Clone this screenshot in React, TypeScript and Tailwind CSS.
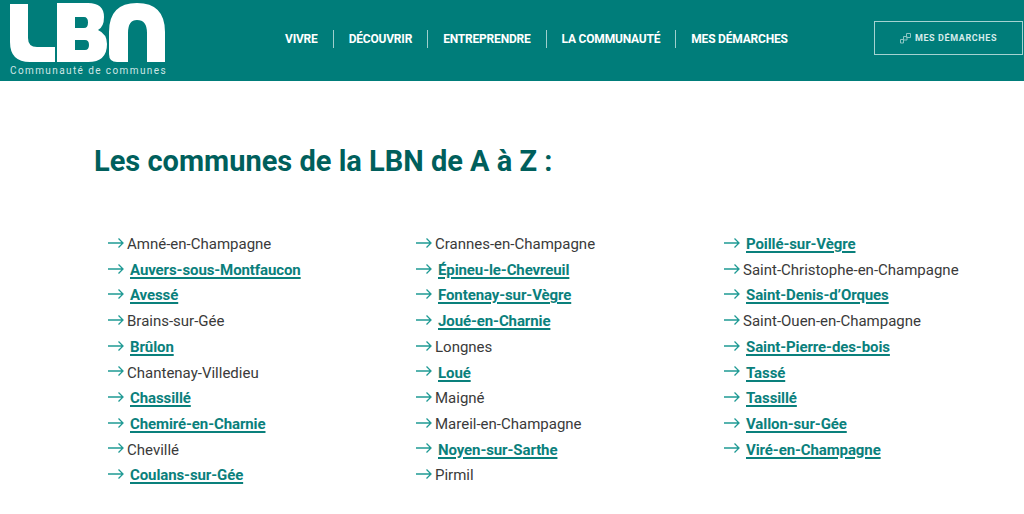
const nav = ['VIVRE', 'DÉCOUVRIR', 'ENTREPRENDRE', 'LA COMMUNAUTÉ', 'MES DÉMARCHES'];

type Commune = { name: string; link?: boolean };

const columns: Commune[][] = [
  [
    { name: 'Amné-en-Champagne' },
    { name: 'Auvers-sous-Montfaucon', link: true },
    { name: 'Avessé', link: true },
    { name: 'Brains-sur-Gée' },
    { name: 'Brûlon', link: true },
    { name: 'Chantenay-Villedieu' },
    { name: 'Chassillé', link: true },
    { name: 'Chemiré-en-Charnie', link: true },
    { name: 'Chevillé' },
    { name: 'Coulans-sur-Gée', link: true },
  ],
  [
    { name: 'Crannes-en-Champagne' },
    { name: 'Épineu-le-Chevreuil', link: true },
    { name: 'Fontenay-sur-Vègre', link: true },
    { name: 'Joué-en-Charnie', link: true },
    { name: 'Longnes' },
    { name: 'Loué', link: true },
    { name: 'Maigné' },
    { name: 'Mareil-en-Champagne' },
    { name: 'Noyen-sur-Sarthe', link: true },
    { name: 'Pirmil' },
  ],
  [
    { name: 'Poillé-sur-Vègre', link: true },
    { name: 'Saint-Christophe-en-Champagne' },
    { name: 'Saint-Denis-d’Orques', link: true },
    { name: 'Saint-Ouen-en-Champagne' },
    { name: 'Saint-Pierre-des-bois', link: true },
    { name: 'Tassé', link: true },
    { name: 'Tassillé', link: true },
    { name: 'Vallon-sur-Gée', link: true },
    { name: 'Viré-en-Champagne', link: true },
  ],
];

const Logo = () => (
  <svg width="157" height="64" viewBox="0 0 157 64" fill="none" className="block">
    <path fill="white" d="M0 4H18V38Q18 47 27 47H45V62H20Q0 62 0 42Z" />
    <path fillRule="evenodd" fill="white" d="M47 3H78Q94 3 94 17Q94 27 88 30Q97 34 97 44Q97 62 78 62H47ZM65 17V28H74Q78 28 78 22.5Q78 17 74 17ZM65 40V50H75Q79 50 79 45Q79 40 75 40Z" />
    <path fill="white" d="M99 32Q99 3 127 3Q155 3 155 32V62H137V33Q137 20 127 20Q118 20 118 33V62H107Q99 62 99 54Z" />
  </svg>
);

const Arrow = () => (
  <svg width="16" height="12" viewBox="0 0 16 12" fill="none" stroke="#1f9a94" strokeWidth="1.3" className="shrink-0 -mt-[3px]">
    <path d="M0 6H15M10.5 1.5L15 6L10.5 10.5" />
  </svg>
);

const Row = ({ name, link }: Commune) => (
  <li className="flex items-center h-[25.7px]">
    <Arrow />
    {link ? (
      <a className="ml-[6px] font-bold text-[15px] text-[#0a807c] underline underline-offset-2 decoration-[1.5px] tracking-[-0.1px]">{name}</a>
    ) : (
      <span className="ml-[3px] text-[15px] text-[#3a3a3a]">{name}</span>
    )}
  </li>
);

export default function App() {
  return (
    <div className="min-h-[514px] bg-white font-['Roboto',sans-serif] overflow-hidden">
      <header className="h-[81px] bg-[#007d7a] flex items-start overflow-hidden">
        <div className="w-[285px] shrink-0 pl-[10px] relative h-full">
          <Logo />
          <span className="absolute left-[10px] top-[65px] text-[10px] leading-[12px] text-[#cfe6e5] tracking-[1.4px] whitespace-nowrap">Communauté de communes</span>
        </div>
        <nav className="flex items-center h-[17px] mt-[30px]">
          {nav.map((item, i) => (
            <span
              key={item}
              className={`text-[12px] font-bold text-white tracking-[-0.2px] whitespace-nowrap ${i === 0 ? 'pr-[15px]' : 'px-[15px]'} ${i < nav.length - 1 ? 'border-r border-[#9fcfcd]' : ''}`}
            >
              {item}
            </span>
          ))}
        </nav>
        <div className="ml-auto mr-px mt-[21px] w-[149px] h-[34px] border border-[#a5d3d1] flex items-center justify-center gap-[4px] text-[#d5ebea]">
          <svg width="11" height="11" viewBox="0 0 11 11" fill="none" stroke="#8cc5c2" strokeWidth="1">
            <path d="M0.5 6.5H3.5V10H0.5ZM3.5 3.5H7V7H3.5ZM6.5 0.5H10.5V4.5H6.5Z" />
          </svg>
          <span className="pt-[2px] text-[9px] font-bold tracking-[0.6px] whitespace-nowrap">MES DÉMARCHES</span>
        </div>
      </header>
      <main className="pl-[94px]">
        <h1 className="mt-[60px] h-[40px] text-[29px] leading-[40px] font-bold text-[#005f5c]">Les communes de la LBN de A à Z :</h1>
        <div className="mt-[50.5px] ml-[14px] grid grid-cols-[308px_308px_1fr]">
          {columns.map((col, i) => (
            <ul key={i}>
              {col.map((c) => (
                <Row key={c.name} {...c} />
              ))}
            </ul>
          ))}
        </div>
      </main>
    </div>
  );
}
